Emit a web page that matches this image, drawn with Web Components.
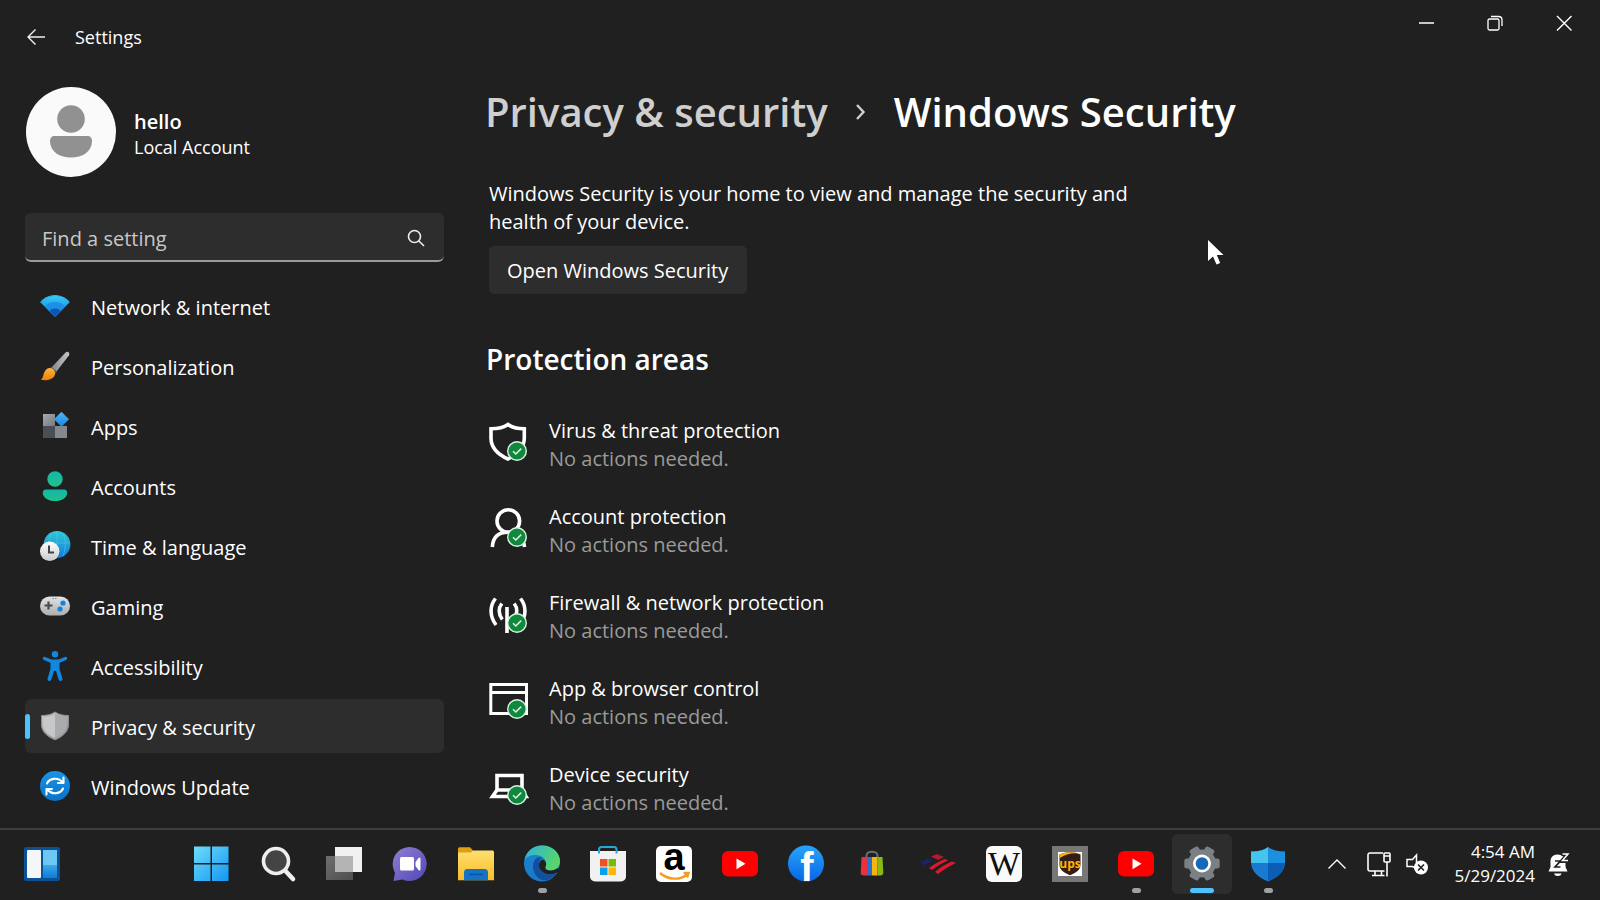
<!DOCTYPE html>
<html lang="en">
<head>
<meta charset="utf-8">
<title>Settings</title>
<style>
    html, body {
        margin: 0;
        height: 100%;
        background: #202020;
        overflow: hidden;
    }
    body {
        --text: #ffffff;
        --text-dim: #9a9a9a;
        --surface: #2d2d2d;
        --accent: #4cc2ff;
        color: var(--text);
        font-family: "Open Sans", "Noto Sans", sans-serif;
        font-size: 20px;
        line-height: 28px;
    }
</style>
</head>
<body>
<desktop-shell>
    <settings-window>
        <title-bar slot="title">Settings</title-bar>
        <user-card slot="side" name="hello">Local Account</user-card>
        <search-box slot="side" label="Find a setting"></search-box>
        <nav-list slot="side">
            <nav-item icon="network">Network &amp; internet</nav-item>
            <nav-item icon="brush">Personalization</nav-item>
            <nav-item icon="apps">Apps</nav-item>
            <nav-item icon="accounts">Accounts</nav-item>
            <nav-item icon="time">Time &amp; language</nav-item>
            <nav-item icon="gaming">Gaming</nav-item>
            <nav-item icon="accessibility">Accessibility</nav-item>
            <nav-item icon="privacy" selected>Privacy &amp; security</nav-item>
            <nav-item icon="update">Windows Update</nav-item>
        </nav-list>
        <bread-crumb parent="Privacy &amp; security">Windows Security</bread-crumb>
        <intro-block action="Open Windows Security">Windows Security is your home to view and manage the security and health of your device.</intro-block>
        <area-list heading="Protection areas">
            <area-item icon="virus" status="No actions needed.">Virus &amp; threat protection</area-item>
            <area-item icon="account" status="No actions needed.">Account protection</area-item>
            <area-item icon="firewall" status="No actions needed.">Firewall &amp; network protection</area-item>
            <area-item icon="browser" status="No actions needed.">App &amp; browser control</area-item>
            <area-item icon="device" status="No actions needed.">Device security</area-item>
        </area-list>
    </settings-window>
    <task-bar slot="taskbar">
        <task-button slot="widgets" icon="widgets" label="Widgets"></task-button>
        <task-button icon="start" label="Start"></task-button>
        <task-button icon="search" label="Search"></task-button>
        <task-button icon="taskview" label="Task view"></task-button>
        <task-button icon="chat" label="Chat"></task-button>
        <task-button icon="explorer" label="File Explorer"></task-button>
        <task-button icon="edge" label="Edge" state="open"></task-button>
        <task-button icon="store" label="Store"></task-button>
        <task-button icon="amazon" label="Amazon"></task-button>
        <task-button icon="youtube" label="YouTube"></task-button>
        <task-button icon="facebook" label="Facebook"></task-button>
        <task-button icon="ebay" label="eBay"></task-button>
        <task-button icon="bank" label="Bank of America"></task-button>
        <task-button icon="wikipedia" label="Wikipedia"></task-button>
        <task-button icon="ups" label="UPS"></task-button>
        <task-button icon="youtube" label="YouTube" state="open"></task-button>
        <task-button icon="settings" label="Settings" state="active"></task-button>
        <task-button icon="defender" label="Windows Security" state="open"></task-button>
        <system-tray slot="tray" time="4:54 AM" date="5/29/2024"></system-tray>
    </task-bar>
    <mouse-pointer slot="pointer"></mouse-pointer>
</desktop-shell>

<script>
const html = String.raw

const svg = (width, height, body) =>
    html`<svg xmlns="http://www.w3.org/2000/svg" width="${width}" height="${height}" viewBox="0 0 ${width} ${height}" overflow="visible" aria-hidden="true">${body}</svg>`

const gradient = (id, from, to, x2 = 1, y2 = 1) => html`
    <linearGradient id="${id}" x1="0" y1="0" x2="${x2}" y2="${y2}">
        <stop offset="0" stop-color="${from}"/><stop offset="1" stop-color="${to}"/>
    </linearGradient>`

// green tick shown on every protection area
const okBadge = html`
    <circle cx="28" cy="29" r="10" fill="#d9f5e3"/>
    <circle cx="28" cy="29" r="8.6" fill="#10893e"/>
    <path d="M24 29.2l2.8 2.8 5.4-5.4" fill="none" stroke="#d9f5e3" stroke-width="1.5"/>`

const areaIcon = (body) => svg(40, 40, html`<g fill="none" stroke="#fff" stroke-width="3.6">${body}</g>${okBadge}`)

const youtube = svg(38, 38, html`
    <rect x="1" y="6" width="36" height="25.5" rx="6" fill="#f00"/>
    <path d="M15.5 13.500l9 5.300-9 5.400z" fill="#fff"/>`)

const icons = {
    // sidebar
    network: svg(30, 30, html`
        <defs>${gradient("n", "#37c8f5", "#1180dc", 0)}</defs>
        <path d="M.6 11C8.500 2.500 21.500 2.500 29.400 11L15 25.600z" fill="url(#n)" stroke="url(#n)" stroke-linejoin="round"/>
        <path d="M5 15.300C10.500 9.500 19.500 9.500 25 15.300L15 25.600z" fill="#1c8fe6"/>
        <path d="M9.600 20C12.500 16.800 17.500 16.800 20.400 20L15 25.600z" fill="#0b55b3"/>`),
    brush: svg(30, 30, html`
        <defs>${gradient("h", "#82868a", "#c4c7ca", 1, 0)}${gradient("o", "#ffb53a", "#f07d0a", 0)}</defs>
        <path d="M11.500 16.500L25.500 1.500C27.500-.2 30.200 1.500 29 4.200L16.500 20.600z" fill="url(#h)"/>
        <path d="M11.300 15.700l5.700 5.400-1.800 2-5.800-5.300z" fill="#55595d"/>
        <path d="M9.200 17C12.500 16.500 15.500 19.500 15 23 14.200 28 8 30.300.8 28.800 4.500 26.500 2.500 18.500 9.200 17z" fill="url(#o)"/>`),
    apps: svg(30, 30, html`
        <defs>${gradient("a", "#4fb4f7", "#1a88e4", 0)}${gradient("g", "#a5a9ae", "#777b81")}</defs>
        <rect x="3" y="3" width="12" height="12" fill="url(#g)"/>
        <rect x="3" y="15" width="12" height="12" fill="#4b4f55"/>
        <rect x="15" y="15" width="12" height="12" fill="#85898f"/>
        <path d="M21.500 1.200l7 7-7 7-7-7z" fill="url(#a)" stroke="url(#a)" stroke-linejoin="round"/>`),
    accounts: svg(30, 30, html`
        <defs>${gradient("t", "#12b8a6", "#22c08d", 0)}</defs>
        <circle cx="15" cy="8" r="7.700" fill="url(#t)"/>
        <path d="M6 18.500h18c2.200 0 3.200 1.500 3.200 3.200 0 5-5.500 8.300-12.200 8.300S2.800 26.700 2.800 21.700c0-1.700 1-3.200 3.200-3.200z" fill="url(#t)"/>`),
    time: svg(30, 30, html`
        <defs>${gradient("w", "#2fc9d4", "#127bdc", 0)}${gradient("c", "#ffffff", "#c8cacc", 0)}</defs>
        <circle cx="17" cy="13.500" r="13.400" fill="url(#w)"/>
        <path d="M4 12h26M17 0v26M11 2c-3 7-3 15 0 23M23 2c3 7 3 15 0 23" fill="none" stroke="#56c8ee" stroke-width=".8" opacity=".7"/>
        <circle cx="9.700" cy="20.300" r="9.700" fill="url(#c)"/>
        <path d="M9 14.500v7h5" fill="none" stroke="#444" stroke-width="2"/>`),
    gaming: svg(30, 30, html`
        <defs>${gradient("p", "#e2e3e5", "#aaadb1", 0)}</defs>
        <rect x="0" y="5.500" width="30" height="19" rx="9.500" fill="url(#p)"/>
        <path d="M8.500 10.500v8M4.500 14.500h8" stroke="#484c50" stroke-width="2.200"/>
        <circle cx="23" cy="12" r="2.600" fill="#1283da"/><circle cx="20" cy="18" r="2.600" fill="#1283da"/>
        <path d="M12.500 7.500h5" stroke="#888" stroke-width="1" stroke-dasharray="1.500 1"/>`),
    accessibility: svg(30, 30, html`
        <g fill="none" stroke="#1287dd" stroke-linecap="round" stroke-linejoin="round">
        <circle cx="15" cy="3.300" r="3.200" fill="#1287dd" stroke="none"/>
        <path d="M4.500 7.500L11.500 10.300h7L25.500 7.500" stroke-width="3.400"/>
        <path d="M12.500 11v7L9.500 28M17.500 11v7L20.500 28M15 11v7" stroke-width="4"/></g>`),
    privacy: svg(30, 30, html`
        <defs>${gradient("s", "#c5c7c9", "#8d9093", 1, 1)}</defs>
        <path d="M15 1c4 2.800 8.500 3.500 13.500 3.500v9C28.500 21 22 26 15 28.800 8 26 1.500 21 1.500 13.500v-9C6.500 4.500 11 3.800 15 1z" fill="url(#s)" stroke="#8d9092"/>
        <path d="M15 3c3.500 2.400 7.500 3.200 11.700 3.300v7.500C26.700 20 21 24.500 15 27z" fill="#a9abae"/>
        <path d="M15 3C11.500 5.400 7.500 6.200 3.300 6.300v7.500C3.300 20 9 24.500 15 27z" fill="#c6c8ca"/>`),
    update: svg(30, 30, html`
        <defs>${gradient("u", "#1a94e6", "#0673c9", 0)}</defs>
        <circle cx="15" cy="15" r="15" fill="url(#u)"/>
        <g fill="none" stroke="#fff" stroke-width="2.100" stroke-linecap="round" stroke-linejoin="round">
        <path d="M7 12.500C9 7.500 18 5.500 22.500 11.500M23.500 6.500V12h-5.500"/>
        <path d="M23 17.500C21 22.500 12 24.500 7.500 18.500M6.500 23.500V18H12"/></g>`),

    // protection areas
    virus: areaIcon(html`<path d="M19 2.500C24 6 29 6.700 35.300 6.700V16C35.300 26 27 33 19 37 10 33 2 26.500 2 16V6.700C9 6.700 14 6 19 2.500z"/>`),
    account: areaIcon(html`<circle cx="19.300" cy="13" r="11.300"/><path d="M3.300 39C4 29 10 24.300 19 24.300S34.500 29 35.500 39"/>`),
    firewall: areaIcon(html`
        <path d="M6.500 4.500C.500 12 .500 22 7 31M31.500 4.500c6 7.500 6 17.500-.5 26.500M12.800 9.500c-3.500 4.500-3.500 11 .5 16M25.200 9.500c3.500 4.500 3.500 11-.5 16"/>
        <path d="M18 13v26"/>`),
    browser: areaIcon(html`<path d="M1.800 4.500h35.700v29H1.800zM1.800 12.500h35.700" stroke-width="3"/>`),
    device: areaIcon(html`<path d="M8 24V9.500h25V24M8 24L3.500 30.500H37L33 24z"/>`),

    // taskbar
    widgets: svg(38, 38, html`
        <defs>${gradient("b", "#3fa8ea", "#0f7bd4", 0)}</defs>
        <rect x="1" y="2" width="36" height="34" rx="2" fill="#0a5296"/>
        <rect x="4" y="5" width="14" height="28" rx="1" fill="#f4f6f8"/>
        <rect x="20" y="5" width="14" height="15" fill="#6cc7f3"/>
        <rect x="20" y="20" width="14" height="13" fill="url(#b)"/>`),
    start: svg(38, 38, html`
        <defs><linearGradient id="st" gradientUnits="userSpaceOnUse" x1="1" y1="1" x2="36" y2="36"><stop offset="0" stop-color="#6fdcfb"/><stop offset="1" stop-color="#1296f2"/></linearGradient></defs>
        <path d="M1 1.500H17.500V18H1zM19 1.500H35.500V18H19zM1 19.500H17.500V36H1zM19 19.500H35.500V36H19z" fill="url(#st)"/>`),
    search: svg(38, 38, html`
        <circle cx="17" cy="16" r="12.500" fill="#444" stroke="#eee" stroke-width="3.600"/>
        <path d="M27 26.500l7 7.500" stroke="#eee" stroke-width="4.600" stroke-linecap="round"/>`),
    taskview: svg(38, 38, html`
        <defs>${gradient("tv", "#6e6e6e", "#4e4e4e")}</defs>
        <rect x="10" y="2" width="27" height="25" fill="#f0f0f0"/>
        <rect x="1" y="11" width="27" height="24" fill="url(#tv)"/>
        <rect x="10" y="11" width="18" height="16" fill="#b4b4b4"/>`),
    chat: svg(38, 38, html`
        <defs>${gradient("ch", "#9080d2", "#5147b8")}</defs>
        <path d="M18.500 2a17 17 0 1 1-7 32.400L2.500 36 4 27.500A17 17 0 0 1 18.500 2z" fill="url(#ch)"/>
        <rect x="9" y="12" width="14" height="13.500" rx="1.500" fill="#fff"/>
        <path d="M24.500 17l3-4c1.500-1 2-.5 2 1v10c0 1.500-.5 2-2 1l-3-4z" fill="#fff"/>`),
    explorer: svg(38, 38, html`
        <defs>${gradient("fo", "#ffdf70", "#f8bd26", 0)}</defs>
        <path d="M1 4c0-1 .7-1.700 1.700-1.700H13l3 3.200V12H1z" fill="#dda014"/>
        <path d="M1 7.500h13l2-2h19.300c1 0 1.700.7 1.700 1.700v28H1z" fill="url(#fo)"/>
        <path d="M7 35.200V27.500c0-2 1.200-3.500 3.200-3.500h17.600c2 0 3.200 1.500 3.200 3.500v7.700z" fill="#1672c4"/>
        <path d="M12 29.500h14" stroke="#0b559c" stroke-width="1.500"/>`),
    edge: svg(38, 38, html`
        <defs>${gradient("e1", "#2cb0e0", "#58d66a", 1, .4)}${gradient("e2", "#1a86cf", "#1b78c8", 0)}</defs>
        <path d="M1 18.500C1 8.500 9 .5 19 .5S37 8 37 16.500c0 3-.5 5-1.500 7.500-1 6-8 12.500-16.500 12.500C9 36.500 1 28.500 1 18.500z" fill="url(#e2)"/>
        <path d="M1.500 15C3.500 6 10 .5 19 .5c10.500 0 18 7.500 18 15.500 0 6-4 9.500-9 9.500-4 0-6.500-1.500-5.500-4C25 15.500 20 10 12.500 10 7.500 10 3 12 1.500 15z" fill="url(#e1)"/>
        <path d="M13.500 13C8.500 17 8.500 27.500 15.500 33c5 4 13 2.500 18-4.500-3 1-5.500 1.500-8.500 1-5.500-1-9-5-9-10.500 0-2.500 1-4.500 3-6-1.500-1-3.500-1-5.500 0z" fill="#11509f"/>
        <path d="M37 24.500C35 28 30 30 25 29.300 19.500 28.500 16 24 16 20c0-2.800 1.500-5 4-5.600 3 1.600 4 4.600 2.500 7.100-1 2.500 1.500 4 5.500 4 3 0 5-1 6.500-2.500z" fill="#202020"/>`),
    store: svg(38, 38, html`
        <path d="M1 6h36v25.500a5 5 0 0 1-5 5H6a5 5 0 0 1-5-5z" fill="#f1f1f1"/>
        <path d="M10 8.500V4.500c0-2 .7-2.500 2.500-2.500h12.500c1.800 0 2.500.5 2.500 2.500v4" fill="none" stroke="#27a6dc" stroke-width="2"/>
        <path d="M11 14h7.500v7.500H11z" fill="#f04e23"/><path d="M19.500 14H27v7.500h-7.500z" fill="#7cb80a"/>
        <path d="M11 22.500h7.500V30H11z" fill="#09a1e8"/><path d="M19.500 22.500H27V30h-7.500z" fill="#fdb50a"/>`),
    amazon: svg(38, 38, html`
        <rect x="1" y="1" width="36" height="36" rx="5" fill="#fff"/>
        <text x="19" y="25" text-anchor="middle" font-family="Liberation Sans" font-weight="700" font-size="38" fill="#000">a</text>
        <path d="M5 28c8 7 20 7.500 27 1.500M28.500 28h5l-1.500 4.500" fill="none" stroke="#f79a1e" stroke-width="2.400"/>`),
    youtube,
    facebook: svg(38, 38, html`
        <defs>${gradient("fb", "#27a5fb", "#0866e4", 0)}</defs>
        <circle cx="19" cy="18.500" r="18" fill="url(#fb)"/>
        <text x="20" y="36" text-anchor="middle" font-family="Liberation Sans" font-weight="700" font-size="40" fill="#fff">f</text>`),
    ebay: svg(38, 38, html`
        <path d="M13.500 13v-2.500c0-5 11-5 11 0V13" fill="none" stroke="#6d6d6d" stroke-width="2"/>
        <path d="M8.500 12H15v18.500H11c-2.500 0-3.500-1-3.300-3z" fill="#e5323c"/>
        <path d="M14 12h5v18.500h-5z" fill="#2b6fd0"/><path d="M19 12h5.500v18.500H19z" fill="#f5b50a"/>
        <path d="M24.500 12h5l.8 15.500c0 2-1 3-3 3h-2.800z" fill="#86b817"/>`),
    bank: svg(38, 38, html`
        <path d="M1 17l8-3.500 5 2.500-9 4.500z" fill="#1c2460"/>
        <path d="M12 11.500l6-2.500 7 3-6 3z" fill="#b3192f"/>
        <path d="M10 23c7-5 11-7 16-9l3 1.500C23 18 18 21 13 25zM16 27c6-5 11-8 17-10.500l4 1.500C30 21 24 25 19 29z" fill="#e0182f"/>`),
    wikipedia: svg(38, 38, html`
        <rect x="1" y="1" width="36" height="36" rx="6" fill="#fafafa"/>
        <text x="19" y="30" text-anchor="middle" font-family="Liberation Serif" font-size="34" fill="#111">W</text>`),
    ups: svg(38, 38, html`
        <rect x="1" y="1" width="36" height="36" fill="#777"/><rect x="7" y="7" width="24" height="24" fill="#fff"/>
        <path d="M8.500 9.500c7-3 14-3 21 0V20c0 5-4.500 7.500-10.500 10.300C13 27.500 8.500 25 8.500 20z" fill="#351c15"/>
        <path d="M9 13c5-4 12.500-5.500 20.500-4.500V9.500c-7-3-14-3-20.500 0z" fill="#ffb500"/>
        <text x="19" y="23" text-anchor="middle" font-family="Open Sans" font-weight="700" font-size="12" fill="#ffb500">ups</text>`),
    settings: svg(38, 38, html`
        <g fill="#7b8085">
            <circle cx="19" cy="18.500" r="14"/>
            ${[0, 60, 120].map(a => html`<rect x="14" y=".8" width="10" height="35.400" rx="2.500" transform="rotate(${a + 30} 19 18.500)"/>`).join("")}
        </g>
        <circle cx="19" cy="18.500" r="9" fill="#fff"/><circle cx="19" cy="18.500" r="6.300" fill="#1768b8"/>`),
    defender: svg(38, 38, html`
        <path d="M19 2c4.500 3.500 10 4.500 17 4.500V17C36 27 28 32.500 19 36.500z" fill="#1b8fe0"/>
        <path d="M19 2C14.500 5.500 9 6.500 2 6.500V17c0 10 8 15.500 17 19.500z" fill="#1a7ad0"/>
        <path d="M19 2C14.500 5.500 9 6.500 2 6.500V18h17z" fill="#45c4f0"/><path d="M19 18h17c-.8 9.500-8.500 14.800-17 18.500z" fill="#0b5db5"/>`),

    // window and tray glyphs
    back: svg(20, 20, html`<path d="M19 10H2M9.500 2.500L2 10l7.500 7.500" fill="none" stroke="#eee" stroke-width="1.400"/>`),
    minimize: svg(18, 18, html`<path d="M2 9h15" stroke="#fff" stroke-width="1.500"/>`),
    restore: svg(18, 18, html`
        <g fill="none" stroke="#fff" stroke-width="1.300"><rect x="2" y="5" width="11" height="11" rx="1.500"/>
        <path d="M5 2.500h7.500c2.200 0 3.500 1.300 3.500 3.500V12"/></g>`),
    close: svg(18, 18, html`<path d="M2 2l14.500 14.500M16.500 2L2 16.500" stroke="#fff" stroke-width="1.400"/>`),
    find: svg(18, 18, html`<g fill="none" stroke="#eee" stroke-width="1.600"><circle cx="7.500" cy="7.500" r="6"/><path d="M11.700 11.700l5.300 5.300"/></g>`),
    crumb: svg(16, 20, html`<path d="M4 3l6.500 7L4 17" fill="none" stroke="#cfcfcf" stroke-width="2.400"/>`),
    up: svg(20, 20, html`<path d="M1.500 14.500L10 6l8.500 8.500" fill="none" stroke="#fff" stroke-width="1.400"/>`),
    lan: svg(26, 26, html`
        <g fill="none" stroke="#fff" stroke-width="1.600">
        <path d="M17 2H4C2.700 2 2 2.700 2 4v14c0 1.300.7 2 2 2h14.500M9 20v4M15.500 20v4M6 24.500h12.500"/>
        <rect x="18" y="2" width="6" height="9" rx="1"/><path d="M18 5h6M21 11v14.500"/></g>`),
    muted: svg(24, 24, html`
        <path d="M11.500 16.500L7.500 14.500H2v-7h5.500L11.500 3v8" fill="none" stroke="#fff" stroke-width="1.500"/>
        <circle cx="16" cy="15.500" r="7" fill="#fff"/>
        <path d="M13 12.500l6 6M19 12.500l-6 6" stroke="#202020" stroke-width="1.600"/>`),
    bell: svg(24, 26, html`
        <path d="M10.500 3.500c-4.500 0-7 3-7 7V16l-2 4.500h19l-2-4.500v-5.500c0-4-3.500-7-8-7zM7 22.500c.8 1.800 2 2.500 3.800 2.500s3-.7 3.800-2.500z" fill="#fff"/>
        <path d="M8 10h5.500L8 16h5.500" fill="none" stroke="#202020" stroke-width="1.700"/>
        <path d="M14.500 3h6.500l-6 7h6.500" fill="none" stroke="#202020" stroke-width="4"/>
        <path d="M15.500 3h5.500l-5.500 6.500h5.500" fill="none" stroke="#fff" stroke-width="1.500"/>`)
}

// shared base: renders once into an open shadow root
class ShellElement extends HTMLElement {
    connectedCallback() {
        if (this.shadowRoot)
            return
        this.attachShadow({ mode: "open" })
        this.shadowRoot.innerHTML = this.render()
    }

    attr(name) {
        return this.getAttribute(name) || ""
    }
}

class DesktopShell extends ShellElement {
    render() {
        return html`
            <style>
                :host {
                    display: grid;
                    grid-template-rows: minmax(0, 1fr) auto;
                    height: 100vh;
                    position: relative;
                }
            </style>
            <slot></slot>
            <slot name="taskbar"></slot>
            <slot name="pointer"></slot>
        `
    }
}

class SettingsWindow extends ShellElement {
    render() {
        return html`
            <style>
                :host { display: flex; flex-direction: column; overflow: hidden; }
                .columns {
                    display: grid;
                    grid-template-columns: 419px minmax(0, 1fr);
                    gap: 45px;
                    padding: 11px 25px 0;
                }
                aside { display: flex; flex-direction: column; padding-top: 2px; }
                main { display: flex; flex-direction: column; align-items: flex-start; }
            </style>
            <slot name="title"></slot>
            <div class="columns">
                <aside><slot name="side"></slot></aside>
                <main><slot></slot></main>
            </div>
        `
    }
}

class TitleBar extends ShellElement {
    render() {
        return html`
            <style>
                :host { display: block; }
                header { display: flex; justify-content: space-between; height: 74px; padding-right: 2px; }
                .left { display: flex; align-items: center; gap: 19px; }
                h1 { margin: 0; font-size: 18px; font-weight: 400; }
                .left button { width: 40px; height: 40px; margin-left: 16px; padding: 0 10px; }
                button { background: none; border: 0; padding: 0; display: grid; place-items: center; }
                .controls { display: flex; height: 46px; }
                .controls button { width: 69px; }
            </style>
            <header>
                <div class="left">
                    <button aria-label="Back">${icons.back}</button>
                    <h1><slot></slot></h1>
                </div>
                <div class="controls">
                    <button aria-label="Minimize">${icons.minimize}</button>
                    <button aria-label="Restore">${icons.restore}</button>
                    <button aria-label="Close">${icons.close}</button>
                </div>
            </header>
        `
    }
}

class UserCard extends ShellElement {
    render() {
        return html`
            <style>
                :host { display: flex; align-items: center; gap: 18px; margin-bottom: 36px; padding-left: 1px; }
                .avatar { width: 90px; height: 90px; border-radius: 50%; background: #fafafa; }
                .text { padding-top: 5px; }
                .name { font-weight: 600; font-size: 20px; line-height: 24px; }
                .kind { font-size: 18px; line-height: 26px; }
            </style>
            <div class="avatar">
                ${svg(90, 90, html`
                    <circle cx="45" cy="32" r="13.800" fill="#919191"/>
                    <path d="M29 49h32c3.500 0 5 2 5 5 0 11-10 16.500-21 16.500S24 65 24 54c0-3 1.500-5 5-5z" fill="#919191"/>`)}
            </div>
            <div class="text">
                <div class="name">${this.attr("name")}</div>
                <div class="kind"><slot></slot></div>
            </div>
        `
    }
}

class SearchBox extends ShellElement {
    render() {
        return html`
            <style>
                :host { display: block; margin-bottom: 17px; }
                form {
                    display: flex;
                    align-items: center;
                    height: 47px;
                    padding: 0 19px 0 17px;
                    background: var(--surface);
                    border-bottom: 2px solid #9a9a9a;
                    border-radius: 6px;
                }
                input {
                    flex: 1;
                    min-width: 0;
                    padding: 4px 0 0;
                    border: 0;
                    outline: 0;
                    background: none;
                    color: inherit;
                    font: inherit;
                }
                input::placeholder { color: #c8c8c8; opacity: 1; }
                button { display: grid; padding: 2px 0 0; border: 0; background: none; }
            </style>
            <form>
                <input type="text" placeholder="${this.attr("label")}" aria-label="${this.attr("label")}">
                <button type="button" aria-label="Search">${icons.find}</button>
            </form>
        `
    }
}

class NavList extends ShellElement {
    render() {
        return html`
            <style>
                :host { display: block; }
                nav { display: flex; flex-direction: column; gap: 6px; }
            </style>
            <nav><slot></slot></nav>
        `
    }
}

class NavItem extends ShellElement {
    render() {
        return html`
            <style>
                :host { display: block; }
                a {
                    display: flex;
                    align-items: center;
                    height: 54px;
                    border-radius: 6px;
                    color: inherit;
                    text-decoration: none;
                }
                i { width: 5px; height: 25px; margin-right: 10px; border-radius: 3px; }
                svg { margin-right: 21px; }
                span { padding-top: 4px; }
                :host([selected]) a { background: var(--surface); }
                :host([selected]) i { background: var(--accent); }
            </style>
            <a href="#${this.attr("icon")}"><i></i>${icons[this.attr("icon")]}<span><slot></slot></span></a>
        `
    }
}

class BreadCrumb extends ShellElement {
    render() {
        return html`
            <style>
                :host { display: block; margin-bottom: 41px; }
                h2 {
                    display: flex;
                    align-items: center;
                    gap: 25px;
                    margin: 0 0 0 -4px;
                    font-size: 40px;
                    line-height: 54px;
                    font-weight: 600;
                    white-space: nowrap;
                }
                a { color: #cfcfcf; text-decoration: none; }
            </style>
            <h2><a href="#privacy">${this.attr("parent").replace("&", "&amp;")}</a>${icons.crumb}<span><slot></slot></span></h2>
        `
    }
}

class IntroBlock extends ShellElement {
    render() {
        return html`
            <style>
                :host { display: block; max-width: 660px; margin-bottom: 47px; }
                p { margin: 0 0 10px; }
                button {
                    height: 48px;
                    padding: 2px 19px 0 18px;
                    border: 0;
                    border-radius: 5px;
                    background: var(--surface);
                    color: inherit;
                    font: inherit;
                }
            </style>
            <p><slot></slot></p>
            <button>${this.attr("action")}</button>
        `
    }
}

class AreaList extends ShellElement {
    render() {
        return html`
            <style>
                :host { display: block; }
                h3 { margin: 0 0 40px -3px; font-size: 28px; line-height: 36px; font-weight: 600; }
                div { display: flex; flex-direction: column; gap: 30px; }
            </style>
            <h3>${this.attr("heading")}</h3>
            <div><slot></slot></div>
        `
    }
}

class AreaItem extends ShellElement {
    render() {
        return html`
            <style>
                :host { display: block; }
                a { display: flex; gap: 20px; color: inherit; text-decoration: none; }
                svg { margin-top: 5px; }
                small { display: block; font-size: inherit; color: var(--text-dim); }
            </style>
            <a href="#${this.attr("icon")}">
                ${icons[this.attr("icon")]}
                <span><slot></slot><small>${this.attr("status")}</small></span>
            </a>
        `
    }
}

class TaskBar extends ShellElement {
    render() {
        return html`
            <style>
                :host { display: block; }
                footer {
                    display: flex;
                    align-items: center;
                    height: 68px;
                    padding: 0 29px 2px 12px;
                    border-top: 2px solid #3e3e3e;
                }
                .apps { display: flex; gap: 6px; margin: 0 auto 0 110px; }
            </style>
            <footer>
                <slot name="widgets"></slot>
                <div class="apps"><slot></slot></div>
                <slot name="tray"></slot>
            </footer>
        `
    }
}

class TaskButton extends ShellElement {
    render() {
        return html`
            <style>
                :host { display: block; }
                button {
                    display: flex;
                    flex-direction: column;
                    align-items: center;
                    justify-content: space-between;
                    width: 60px;
                    height: 60px;
                    padding: 11px 0 1px;
                    border: 0;
                    border-radius: 6px;
                    background: none;
                }
                i { width: 9px; height: 5px; border-radius: 3px; }
                :host([state="open"]) i { background: #a0a0a0; }
                :host([state="active"]) i { width: 24px; background: var(--accent); }
                :host([state="active"]) button { background: var(--surface); }
            </style>
            <button aria-label="${this.attr("label")}">${icons[this.attr("icon")]}<i></i></button>
        `
    }
}

class SystemTray extends ShellElement {
    render() {
        return html`
            <style>
                :host { display: flex; align-items: center; }
                button {
                    display: flex;
                    align-items: center;
                    padding: 0;
                    border: 0;
                    background: none;
                    color: inherit;
                    font: inherit;
                }
                .net { gap: 13px; margin: 0 25px 0 19px; }
                .clock { gap: 12px; font-size: 17px; line-height: 24px; text-align: right; }
                time { display: block; }
            </style>
            <button aria-label="Show hidden icons">${icons.up}</button>
            <button class="net" aria-label="Network and volume">${icons.lan}${icons.muted}</button>
            <button class="clock"><span><time>${this.attr("time")}</time><time>${this.attr("date")}</time></span>${icons.bell}</button>
        `
    }
}

class MousePointer extends ShellElement {
    render() {
        return html`
            <style>
                :host { position: absolute; left: 1207px; top: 239px; pointer-events: none; }
            </style>
            ${svg(18, 28, html`<path d="M1 1v21l5-4.500 3.500 8 3.700-1.600L9.800 16H16.500z" fill="#fff"/>`)}
        `
    }
}

customElements.define('desktop-shell', DesktopShell)
customElements.define('settings-window', SettingsWindow)
customElements.define('title-bar', TitleBar)
customElements.define('user-card', UserCard)
customElements.define('search-box', SearchBox)
customElements.define('nav-list', NavList)
customElements.define('nav-item', NavItem)
customElements.define('bread-crumb', BreadCrumb)
customElements.define('intro-block', IntroBlock)
customElements.define('area-list', AreaList)
customElements.define('area-item', AreaItem)
customElements.define('task-bar', TaskBar)
customElements.define('task-button', TaskButton)
customElements.define('system-tray', SystemTray)
customElements.define('mouse-pointer', MousePointer)
</script>
</body>
</html>
